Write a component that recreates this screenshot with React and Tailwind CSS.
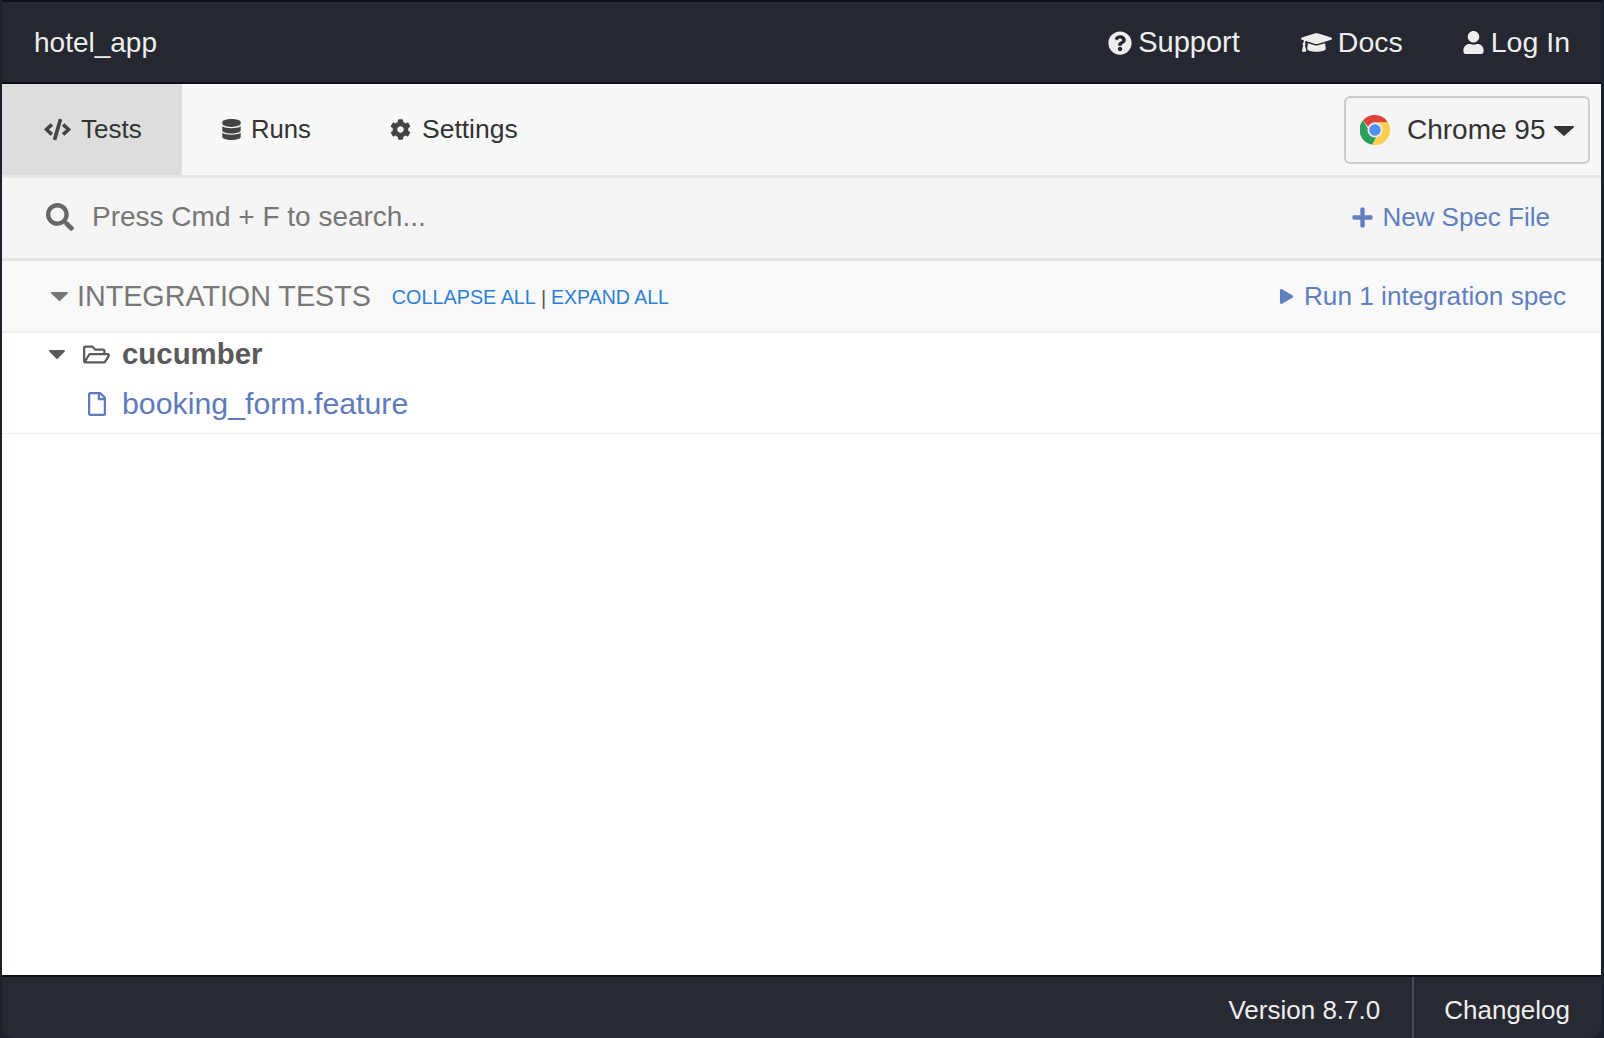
import React from "react";
import {
  FaQuestionCircle,
  FaGraduationCap,
  FaUser,
  FaCode,
  FaDatabase,
  FaCog,
  FaSearch,
  FaPlus,
  FaRegFolderOpen,
  FaRegFile,
  FaPlay,
} from "react-icons/fa";

function ChromeLogo() {
  return (
    <svg width="30" height="30" viewBox="3 3 42 42" className="shrink-0">
      <path d="M24 3a21 21 0 0 1 18.2 10.5H24a10.5 10.5 0 0 0-9.6 6.3L7.3 10.3A21 21 0 0 1 24 3z" fill="#db4437" />
      <path d="M7.3 10.3l8.9 15.4A10.5 10.5 0 0 0 26 34.3l-6 10.3A21 21 0 0 1 7.3 10.3z" fill="#2c9f5b" />
      <path d="M42.2 13.5A21 21 0 0 1 20 44.6l9-15.6a10.5 10.5 0 0 0-.4-15.5z" fill="#fcd04f" />
      <circle cx="24" cy="24" r="10.5" fill="#e8eaf0" />
      <circle cx="24" cy="24" r="8" fill="#4f8ff0" />
    </svg>
  );
}

// rounded css-like caret, same shape everywhere
function Caret({ w, h, className }) {
  return (
    <svg width={w} height={h} viewBox="0 0 20 10" preserveAspectRatio="none" className={`shrink-0 ${className}`}>
      <path d="M1 0h18c.9 0 1.3 1 .7 1.6l-9 8c-.4.4-1 .4-1.4 0l-9-8C-.3 1 .1 0 1 0z" fill="currentColor" />
    </svg>
  );
}

function TopLink({ icon, label, className }) {
  return (
    <a className={`flex items-center gap-[6px] ${className}`}>
      {icon}
      <span>{label}</span>
    </a>
  );
}

function Tab({ icon, label, active, className }) {
  return (
    <a className={`flex items-center h-full text-[#333] ${active ? "bg-[#ddd]" : ""} ${className}`}>
      {icon}
      <span>{label}</span>
    </a>
  );
}

export default function App() {
  return (
    <div className="w-[1604px] h-[1038px] flex flex-col bg-[#1c222b] pl-[2px] pr-[3px] overflow-hidden font-['Liberation_Sans',Arial,sans-serif]">
      {/* TOP BAR */}
      <div className="h-[84px] shrink-0 bg-[#252830] border-t-[2px] border-b-[2px] border-[#0d0f12] text-[#eee] text-[28.5px] flex items-center justify-between pl-[32px] pr-[31px] pt-[1px]">
        <span className="text-[28px]">hotel_app</span>
        <div className="flex items-center gap-[59px]">
          <TopLink className="text-[29px] mr-[2px]" icon={<FaQuestionCircle size={24} />} label="Support" />
          <TopLink icon={<FaGraduationCap size={31} />} label="Docs" />
          <TopLink icon={<FaUser size={23} />} label="Log In" />
        </div>
      </div>

      <div className="flex-1 flex flex-col bg-white">
        {/* NAV */}
        <div className="h-[94px] shrink-0 bg-[#f8f8f8] border-b-[3px] border-[#e7e7e7] flex items-center justify-between pr-[11px] text-[26px]">
          <div className="flex items-center h-full">
            <Tab active className="w-[180px] pl-[42px] gap-[10px]" icon={<FaCode size={27} className="text-[#444]" />} label="Tests" />
            <Tab className="pl-[39px] gap-[9px] text-[25.7px]" icon={<FaDatabase size={21} className="text-[#444]" />} label="Runs" />
            <Tab className="pl-[79px] gap-[11px] text-[26.5px]" icon={<FaCog size={21} className="text-[#444]" />} label="Settings" />
          </div>
          <button className="w-[246px] h-[68px] border-2 border-[#ccc] rounded-[6px] bg-[#f5f5f5] flex items-center pl-[14px] text-[#333] text-[28px]">
            <ChromeLogo />
            <span className="ml-[17px]">Chrome 95</span>
            <Caret w={20} h={10} className="ml-[8px] mt-[3px] text-[#333]" />
          </button>
        </div>

        {/* SEARCH */}
        <div className="h-[83px] shrink-0 bg-[#f5f5f5] border-b-[3px] border-[#e3e3e3] flex items-center justify-between pl-[44px] pr-[51px] pb-[2px]">
          <div className="flex items-center gap-[18px] text-[28px] text-[#777]">
            <FaSearch size={28} className="text-[#666]" />
            <span>Press Cmd + F to search...</span>
          </div>
          <a className="flex items-center gap-[8px] text-[26px] text-[#5f7fbf]">
            <FaPlus size={23} />
            <span>New Spec File</span>
          </a>
        </div>

        {/* SPECS HEADER */}
        <div className="h-[72px] shrink-0 bg-[#f9f9f9] border-b-[2px] border-[#eee] flex items-center pl-[49px] pr-[35px]">
          <Caret w={17} h={9} className="text-[#777]" />
          <span className="ml-[9px] mt-[1px] text-[28.7px] text-[#777]">INTEGRATION TESTS</span>
          <a className="ml-[21px] mt-[3px] text-[19.8px] text-[#2d7fd3]">COLLAPSE ALL</a>
          <span className="mx-[5px] mt-[3px] text-[20px] text-[#555]">|</span>
          <a className="mt-[3px] text-[19.5px] text-[#2d7fd3]">EXPAND ALL</a>
          <a className="ml-auto mt-[1px] flex items-center gap-[10px] text-[26.2px] text-[#5f7fbf]">
            <FaPlay size={15} />
            <span>Run 1 integration spec</span>
          </a>
        </div>

        {/* SPEC TREE */}
        <div className="h-[43px] flex items-center pl-[47px] text-[#5a5a5a]">
          <Caret w={16} h={9} />
          <FaRegFolderOpen size={27} className="ml-[18px]" />
          <span className="ml-[12px] text-[29.4px] font-bold">cucumber</span>
        </div>
        <div className="h-[58px] flex items-center pl-[83px] pb-[1px] border-b-[1px] border-dotted border-[#ddd] text-[#5f7bbb]">
          <FaRegFile size={24} />
          <span className="ml-[13px] text-[30.3px]">booking_form.feature</span>
        </div>
        <div className="flex-1" />

        {/* FOOTER */}
        <div className="h-[63px] shrink-0 bg-[#1c222b]">
          <div className="h-full bg-[#272a33] border-t-[2px] border-[#0d0f12] rounded-b-[12px] text-[#eee] text-[26px] flex items-stretch justify-end">
            <div className="flex items-center pt-[6px] pr-[32px]">Version 8.7.0</div>
            <div className="flex items-center pt-[6px] pl-[30px] pr-[31px] border-l-[2px] border-[#444a5c]">Changelog</div>
          </div>
        </div>
      </div>
    </div>
  );
}
